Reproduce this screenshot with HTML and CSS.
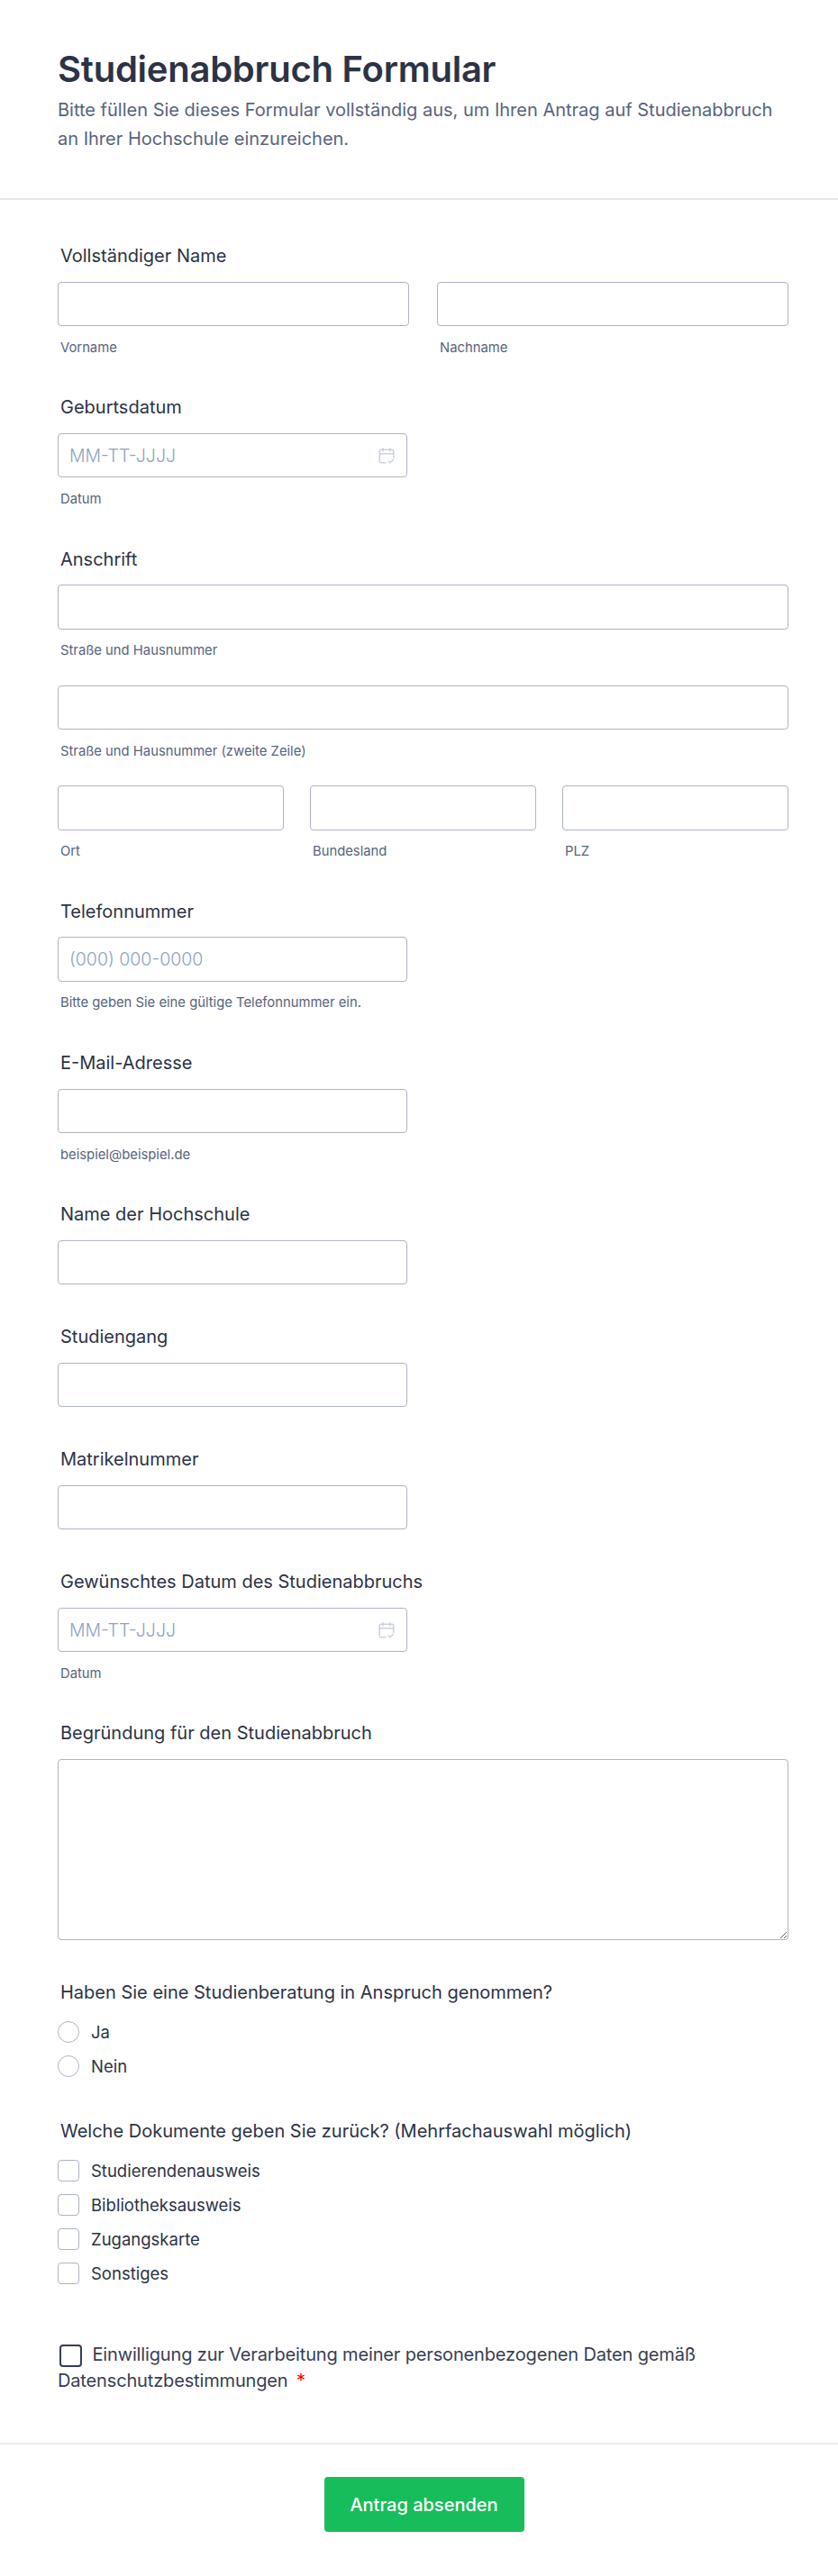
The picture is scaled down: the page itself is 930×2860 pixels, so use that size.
FILE: index.html
```html
<!DOCTYPE html>
<html lang="de">
<head>
    <meta charset="UTF-8">
    <meta name="viewport" content="width=device-width, initial-scale=1">
    <title>Studienabbruch Formular</title>
    <link rel="stylesheet" href="styles.css">
</head>
<body>

<form class="form">
    <header class="form-header">
        <h1>Studienabbruch Formular</h1>
        <p>Bitte füllen Sie dieses Formular vollständig aus, um Ihren Antrag auf Studienabbruch an Ihrer Hochschule einzureichen.</p>
    </header>

    <div class="form-body">
        <div class="field">
            <label class="label">Vollständiger Name</label>
            <div class="row row-2">
                <div><input class="input" type="text"><span class="sub">Vorname</span></div>
                <div><input class="input" type="text"><span class="sub">Nachname</span></div>
            </div>
        </div>

        <div class="field">
            <label class="label">Geburtsdatum</label>
            <div class="date input-short">
                <input class="input" type="text" placeholder="MM-TT-JJJJ">
                <svg class="date-icon" viewBox="0 0 18 18" fill="none" stroke="#ccd2dd" stroke-width="1.4" stroke-linecap="round" stroke-linejoin="round">
                    <path d="M8 16H3.5A1.5 1.5 0 0 1 2 14.5V4.5A1.5 1.5 0 0 1 3.5 3h11A1.5 1.5 0 0 1 16 4.500V11"/>
                    <path d="M2 7h14M5.500 1.500v3M12.500 1.500v3"/>
                    <path d="M11 14.500l1.500 1.500 3-3"/>
                </svg>
            </div>
            <span class="sub">Datum</span>
        </div>

        <div class="field">
            <label class="label">Anschrift</label>
            <input class="input" type="text">
            <span class="sub">Straße und Hausnummer</span>
            <input class="input input-next" type="text">
            <span class="sub">Straße und Hausnummer (zweite Zeile)</span>
            <div class="row row-3 input-next">
                <div><input class="input" type="text"><span class="sub">Ort</span></div>
                <div><input class="input" type="text"><span class="sub">Bundesland</span></div>
                <div><input class="input" type="text"><span class="sub">PLZ</span></div>
            </div>
        </div>

        <div class="field">
            <label class="label">Telefonnummer</label>
            <input class="input input-short" type="text" placeholder="(000) 000-0000">
            <span class="sub">Bitte geben Sie eine gültige Telefonnummer ein.</span>
        </div>

        <div class="field">
            <label class="label">E-Mail-Adresse</label>
            <input class="input input-short" type="text">
            <span class="sub">beispiel@beispiel.de</span>
        </div>

        <div class="field field-plain">
            <label class="label">Name der Hochschule</label>
            <input class="input input-short" type="text">
        </div>

        <div class="field field-plain">
            <label class="label">Studiengang</label>
            <input class="input input-short" type="text">
        </div>

        <div class="field field-plain">
            <label class="label">Matrikelnummer</label>
            <input class="input input-short" type="text">
        </div>

        <div class="field">
            <label class="label">Gewünschtes Datum des Studienabbruchs</label>
            <div class="date input-short">
                <input class="input" type="text" placeholder="MM-TT-JJJJ">
                <svg class="date-icon" viewBox="0 0 18 18" fill="none" stroke="#ccd2dd" stroke-width="1.4" stroke-linecap="round" stroke-linejoin="round">
                    <path d="M8 16H3.5A1.5 1.5 0 0 1 2 14.5V4.5A1.5 1.5 0 0 1 3.5 3h11A1.5 1.5 0 0 1 16 4.500V11"/>
                    <path d="M2 7h14M5.500 1.500v3M12.500 1.500v3"/>
                    <path d="M11 14.500l1.500 1.500 3-3"/>
                </svg>
            </div>
            <span class="sub">Datum</span>
        </div>

        <div class="field field-text">
            <label class="label">Begründung für den Studienabbruch</label>
            <textarea class="input textarea"></textarea>
        </div>

        <div class="field field-choice">
            <label class="label label-choice">Haben Sie eine Studienberatung in Anspruch genommen?</label>
            <label class="choice"><input class="radio" type="radio" name="beratung"> Ja</label>
            <label class="choice"><input class="radio" type="radio" name="beratung"> Nein</label>
        </div>

        <div class="field field-choice">
            <label class="label label-choice">Welche Dokumente geben Sie zurück? (Mehrfachauswahl möglich)</label>
            <label class="choice"><input class="check" type="checkbox"> Studierendenausweis</label>
            <label class="choice"><input class="check" type="checkbox"> Bibliotheksausweis</label>
            <label class="choice"><input class="check" type="checkbox"> Zugangskarte</label>
            <label class="choice"><input class="check" type="checkbox"> Sonstiges</label>
        </div>

        <p class="consent">
            <input class="check check-dark" type="checkbox">
            Einwilligung zur Verarbeitung meiner personenbezogenen Daten gemäß Datenschutzbestimmungen <span class="required">*</span>
        </p>
    </div>

    <footer class="form-footer">
        <button class="button" type="button">Antrag absenden</button>
    </footer>
</form>

</body>
</html>
```

FILE: styles.css
```css
body {
    font-family: Inter, "Liberation Sans", sans-serif;
    margin: 0;
    background-color: #fff;
    color: #2c3345;
}
.form {
    height: 2860px;
}
.form-header {
    box-sizing: border-box;
    height: 222px;
    padding: 52px 64px 0;
    border-bottom: 2px solid #e3e5ec;
}
.form-header h1 {
    margin: 0 0 4px;
    font-size: 40px;
    line-height: 50px;
    font-weight: 600;
    letter-spacing: -0.25px;
}
.form-header p {
    margin: 0;
    font-size: 20px;
    line-height: 32px;
    color: #57647e;
}
.form-body {
    padding: 50px 55px 0 64px;
}
.field {
    margin-bottom: 44.6px;
}
.field-plain {
    margin-bottom: 45.8px;
}
.field-text {
    margin-bottom: 45.5px;
}
.field-choice {
    margin-bottom: 48.5px;
}
.label {
    display: block;
    margin: 0 3px 16.6px;
    font-size: 20px;
    line-height: 24px;
    font-weight: 400;
}
.input {
    display: block;
    box-sizing: border-box;
    width: 100%;
    height: 49.6px;
    padding: 0 12px;
    font-family: inherit;
    font-size: 19.5px;
    font-weight: 300;
    color: #2c3345;
    background-color: #fff;
    border: 1px solid #aeb4c6;
    border-radius: 4px;
}
.input::placeholder {
    color: #8ea4c2;
}
.input-short {
    width: 388px;
}
.input-next {
    margin-top: 28.3px;
}
.textarea {
    height: 201px;
    padding: 12px;
}
.sub {
    display: block;
    margin: 13.5px 3px 0;
    font-size: 14.8px;
    line-height: 20px;
    color: #57647e;
}
.row {
    display: grid;
}
.row-2 {
    grid-template-columns: 1fr 1fr;
    gap: 31px;
}
.row-3 {
    grid-template-columns: 1fr 1fr 1fr;
    gap: 29px;
}
.date {
    position: relative;
}
.date-icon {
    position: absolute;
    top: 15px;
    right: 13px;
    width: 20px;
    height: 20px;
}
.label-choice {
    margin-bottom: 20px;
}
.choice {
    display: flex;
    align-items: center;
    gap: 13px;
    height: 24px;
    margin-bottom: 14px;
    font-size: 18.5px;
    color: #2c3345;
}
.radio,
.check {
    appearance: none;
    box-sizing: border-box;
    flex: none;
    width: 24px;
    height: 24px;
    margin: 0;
    background-color: #fff;
    border: 1px solid #aeb4c6;
}
.radio {
    border-radius: 50%;
}
.check {
    border-radius: 4px;
}
.check-dark {
    width: 25px;
    height: 25px;
    margin-left: 2px;
    margin-right: 6px;
    border: 2px solid #383e52;
    vertical-align: middle;
}
.consent {
    margin: 64px 0 0;
    font-size: 20px;
    line-height: 29px;
    letter-spacing: -0.15px;
    color: #383e52;
}
.required {
    color: #f00;
    margin-left: 4px;
}
.form-footer {
    margin-top: 54px;
    padding: 36px 0 0 11px;
    text-align: center;
    border-top: 2px solid #ebedf2;
}
.button {
    width: 222px;
    height: 61px;
    font-family: inherit;
    font-size: 20px;
    font-weight: 500;
    color: #fff;
    cursor: pointer;
    background-color: #18bd5b;
    border: none;
    border-radius: 4px;
}
```
